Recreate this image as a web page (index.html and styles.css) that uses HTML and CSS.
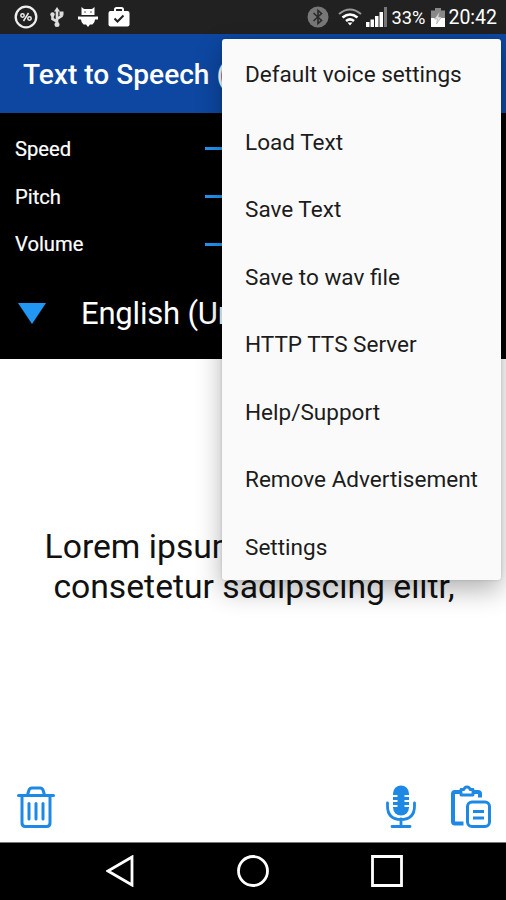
FILE: index.html
```html
<!DOCTYPE html>
<html lang="en">
<head>
  <meta charset="UTF-8">
  <meta name="viewport" content="width=device-width, initial-scale=1.0">
  <title>Text to Speech</title>
  <link rel="stylesheet" href="styles.css">
</head>
<body>
  <div class="phone">
    <div class="status-bar">
      <div class="status-left">
        <svg width="24" height="24" viewBox="0 0 24 24" fill="none" stroke="#eee">
          <circle cx="12" cy="12" r="10.300" stroke-width="2.300"/>
          <path d="M14.500 8l-5 8" stroke-width="1.500"/>
          <circle cx="8.500" cy="10.500" r="1.700" stroke-width="1.500"/>
          <circle cx="15.500" cy="13.500" r="1.700" stroke-width="1.500"/>
        </svg>
        <svg width="14" height="20" viewBox="0 0 14 20" fill="#ddd" stroke="#ddd">
          <path d="M7 3v14M7 14.500L2.500 12V8M7 12l4.500-3V6" fill="none" stroke-width="2.600"/>
          <path d="M7 0l3 4.500H4z" stroke="none"/>
          <circle cx="7" cy="17.500" r="2.500" stroke="none"/>
          <circle cx="2.500" cy="7.500" r="2.200" stroke="none"/>
          <path d="M9.500 4.500h4v4h-4z" stroke="none"/>
        </svg>
        <svg width="20" height="20" viewBox="0 0 20 20" fill="#fff">
          <path d="M3.500 0l2.500 2h8l2.500-2v8h-13zM0 9.500h20v3h-3q0 3-2.500 5H12L10 20l-2-2.500H5.500Q3 15.500 3 12.500H0z"/>
          <path d="M2 8.700h16" stroke="#212121" stroke-width="1"/>
          <circle cx="7" cy="5" r=".7" fill="#212121"/>
          <circle cx="13" cy="5" r=".7" fill="#212121"/>
        </svg>
        <svg width="22" height="20" viewBox="0 0 22 20">
          <path d="M7 4V2.500Q7 1 8.500 1h5Q15 1 15 2.500V4" fill="none" stroke="#fff" stroke-width="2"/>
          <rect x="0.500" y="4" width="21" height="15.500" rx="2" fill="#fff"/>
          <path d="M6.500 11.500l3 3 6-6" fill="none" stroke="#212121" stroke-width="2"/>
        </svg>
      </div>
      <div class="status-right">
        <svg width="22" height="22" viewBox="0 0 22 22">
          <circle cx="11" cy="11" r="10.500" fill="#777"/>
          <path d="M6.500 7l8 7.500-3.500 3V4.500l3.500 3-8 7.500" fill="none" stroke="#292929" stroke-width="1.600"/>
        </svg>
        <svg class="wifi" width="24" height="18" viewBox="0 0 24 18" fill="none" stroke="#fff" stroke-width="2.600">
          <path d="M1 6Q12-3 23 6" stroke="#999" stroke-width="2"/>
          <path d="M4.500 9.500q7.500-6 15 0M8 13q4-3.200 8 0"/>
          <path d="M9.500 14.500h5L12 17.500z" fill="#fff" stroke="none"/>
        </svg>
        <svg class="signal" width="21" height="20" viewBox="0 0 21 20" fill="#fff">
          <path d="M0 15h3.500v5H0zM4.500 12.500H8V20H4.500zM9 9h3.500v11H9zM13.500 5H17v15h-3.500z"/>
          <path d="M18 0h3v20h-3z" fill="#777"/>
        </svg>
        <span class="percent">33%</span>
        <svg class="battery" width="14" height="19" viewBox="0 0 14 19">
          <path d="M4 0h6v2.500h4V11H0V2.500h4z" fill="#888"/>
          <path d="M0 10h14v9H0z" fill="#fff"/>
          <path d="M8.500 4L3.500 11h3L5.500 16l5-7h-3z" fill="#ddd" stroke="#999" stroke-width=".5"/>
        </svg>
        <span class="clock">20:42</span>
      </div>
    </div>

    <header class="toolbar">Text to Speech (TTS)</header>

    <section class="controls">
      <div class="slider-row"><span>Speed</span><div class="slider"></div></div>
      <div class="slider-row"><span>Pitch</span><div class="slider"></div></div>
      <div class="slider-row"><span>Volume</span><div class="slider"></div></div>
      <div class="language">
        <svg width="28" height="21" viewBox="0 0 28 21"><path d="M0 0h28L14 21z" fill="#2196f3"/></svg>
        <span>English (United States)</span>
      </div>
    </section>

    <main class="editor">
      <p>Lorem ipsum dolor sit amet,<br>consetetur sadipscing elitr,</p>
      <div class="actions">
        <svg class="trash" width="38" height="42" viewBox="0 0 38 42" fill="none" stroke="#1e88e5" stroke-width="3" stroke-linecap="round" stroke-linejoin="round">
          <path d="M1.500 9.500h35M10.500 9l1.500-5q.8-2 3-2h8q2.200 0 3 2l1.500 5M5 10v27q0 3.500 3.500 3.500h21q3.500 0 3.500-3.500V10"/>
          <path d="M12 17.500v15.500M19 17.500v15.500M26 17.500v15.500"/>
        </svg>
        <svg class="mic" width="30" height="43" viewBox="0 0 30 43">
          <rect x="7" y="0.500" width="16" height="30" rx="8" fill="#1e88e5"/>
          <path d="M6 11h5.500M6 16h5.500M6 21h5.500M18.500 11H24M18.500 16H24M18.500 21H24" stroke="#fff" stroke-width="2"/>
          <path d="M1.500 18v3q0 13.500 13.500 13.500T28.500 21v-3M15 34v7M6 41.500h18" fill="none" stroke="#1e88e5" stroke-width="2.800" stroke-linecap="round"/>
        </svg>
        <svg class="paste" width="40" height="43" viewBox="0 0 40 43" fill="none" stroke="#1e88e5" stroke-width="3" stroke-linejoin="round">
          <path d="M12.500 38.500H4q-2 0-2-2V9q0-2 2-2h6M22 7h5q2 0 2 2v3.500" stroke-width="4"/>
          <path d="M10 4.500h3Q13.500 2 16 2t3 2.500h3V10H10z" stroke-width="2.800"/>
          <rect x="16.500" y="17" width="22" height="24.500" rx="4.500"/>
          <path d="M22 26.500h11M22 33h11"/>
        </svg>
      </div>
    </main>

    <nav class="nav-bar">
      <svg width="28" height="32" viewBox="0 0 28 32"><path d="M2 16L26 2v28z"/></svg>
      <svg width="32" height="32" viewBox="0 0 32 32"><circle cx="16" cy="16" r="14.500"/></svg>
      <svg width="32" height="32" viewBox="0 0 32 32"><path d="M1.500 1.500h29v29h-29z"/></svg>
    </nav>

    <ul class="menu">
      <li>Default voice settings</li>
      <li>Load Text</li>
      <li>Save Text</li>
      <li>Save to wav file</li>
      <li>HTTP TTS Server</li>
      <li>Help/Support</li>
      <li>Remove Advertisement</li>
      <li>Settings</li>
    </ul>
  </div>
</body>
</html>
```

FILE: styles.css
```css
body {
  margin: 0;
  font-family: Roboto, sans-serif;
}
.phone {
  position: relative;
  width: 506px;
  height: 900px;
  overflow: hidden;
  display: flex;
  flex-direction: column;
  background: #fff;
}
svg {
  flex: none;
}
.status-bar {
  height: 34px;
  background: #212121;
  display: flex;
  justify-content: space-between;
  align-items: center;
  padding: 0 9px 0 14px;
  color: #fff;
}
.status-left,
.status-right {
  display: flex;
  align-items: center;
}
.status-left svg:nth-child(2) {
  margin-left: 12px;
}
.status-left svg:nth-child(3) {
  margin-left: 14px;
}
.status-left svg:nth-child(4) {
  margin-left: 10px;
}
.wifi {
  margin-left: 9px;
}
.signal {
  margin-left: 4px;
}
.percent {
  margin-left: 4px;
  font-size: 18.3px;
}
.battery {
  margin-left: 6px;
}
.clock {
  margin-left: 3px;
  font-size: 19.5px;
}
.toolbar {
  height: 79px;
  line-height: 82px;
  padding-left: 23px;
  background: #0d47a1;
  color: #fff;
  font-size: 28.1px;
  font-weight: 500;
  white-space: nowrap;
}
.controls {
  height: 246px;
  box-sizing: border-box;
  padding: 12px 15px 0;
  background: #000;
  color: #fff;
}
.slider-row {
  display: flex;
  align-items: center;
  height: 47.7px;
  font-size: 20.2px;
  -webkit-text-stroke: 0.2px #fff;
}
.slider-row span {
  width: 190px;
}
.slider {
  flex: 1;
  height: 3px;
  background: #2196f3;
}
.language {
  display: flex;
  align-items: center;
  gap: 35px;
  height: 90px;
  padding-left: 3px;
  font-size: 31px;
  letter-spacing: -0.2px;
  white-space: nowrap;
}
.editor {
  flex: 1;
  display: flex;
  flex-direction: column;
}
.editor p {
  margin: 168px 0 0;
  padding-left: 2px;
  text-align: center;
  font-size: 33.7px;
  line-height: 40px;
  color: #111;
}
.actions {
  margin-top: auto;
  display: flex;
  align-items: center;
  padding: 0 15px 14px 17px;
}
.mic {
  margin-left: auto;
}
.paste {
  margin-left: 35px;
}
.nav-bar {
  height: 58px;
  box-sizing: border-box;
  border-top: 1px solid #777;
  background: #000;
  display: flex;
  justify-content: space-between;
  align-items: center;
  padding: 0 103px 2px 106px;
}
.nav-bar path,
.nav-bar circle {
  fill: none;
  stroke: #fff;
  stroke-width: 2.8;
}
.menu {
  position: absolute;
  left: 222px;
  top: 39px;
  width: 279px;
  height: 541px;
  box-sizing: border-box;
  margin: 0;
  padding: 2px 0 0 23px;
  list-style: none;
  background: #fafafa;
  border-radius: 3px;
  box-shadow: 0 10px 26px rgba(0, 0, 0, 0.3), 0 0 3px rgba(0, 0, 0, 0.15);
  color: #1c1c1c;
  font-size: 22.55px;
}
.menu li {
  height: 67.5px;
  line-height: 67.5px;
  white-space: nowrap;
}
```
